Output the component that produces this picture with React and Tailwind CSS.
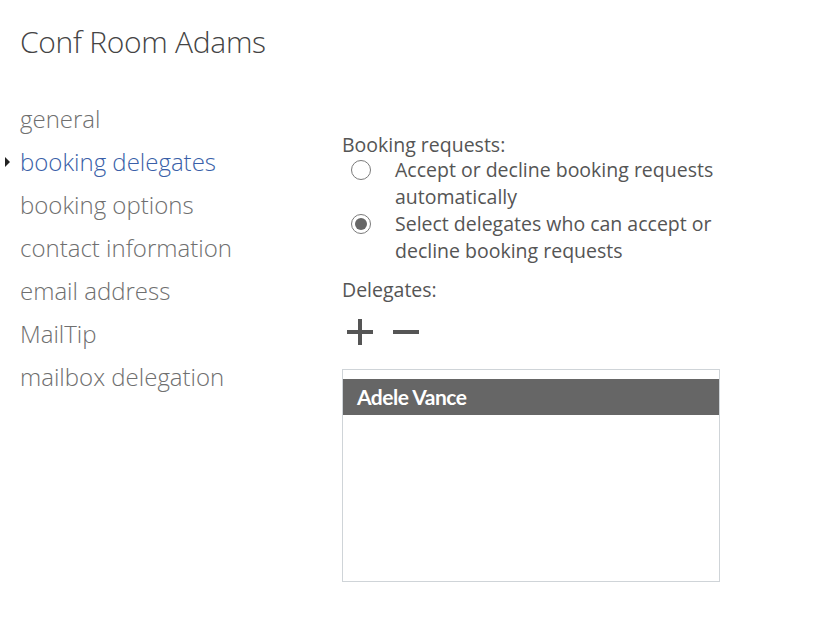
export default function App() {
  const items = [
    "general",
    "booking delegates",
    "booking options",
    "contact information",
    "email address",
    "MailTip",
    "mailbox delegation",
  ];
  const active = "booking delegates";

  return (
    <div className="w-[840px] h-[636px] bg-white font-['Open_Sans',sans-serif] text-[#444] relative">
      <h1 className="pl-5 pt-[22px] text-[30px] leading-[40px] font-light text-[#444] tracking-[-0.3px]">
        Conf Room Adams
      </h1>

      <div className="flex mt-[35px]">
        {/* left nav */}
        <ul className="w-[342px] shrink-0">
          {items.map((item) => (
            <li key={item} className="relative h-[43px] leading-[43px] pl-5">
              {item === active && (
                <span className="absolute left-[5px] top-[17px] w-0 h-0 border-y-[5px] border-y-transparent border-l-[5px] border-l-[#222]" />
              )}
              <span
                className={
                  "text-[24px] font-light " +
                  (item === active ? "text-[#3a5fa8]" : "text-[#6f6f6f]")
                }
              >
                {item}
              </span>
            </li>
          ))}
        </ul>

        {/* right content */}
        <div className="w-[378px] pt-[35px] text-[19.5px] text-[#555]">
          <div className="leading-[26px]">Booking requests:</div>

          <div className="mt-[-2px] flex flex-col">
            <label className="flex items-start">
              <span className="pl-[9px] pt-[4px] shrink-0">
                <span className="block w-[20px] h-[20px] rounded-full border border-[#7a7a7a] bg-white" />
              </span>
              <span className="ml-[24px] leading-[27px]">
                Accept or decline booking requests automatically
              </span>
            </label>
            <label className="flex items-start">
              <span className="pl-[9px] pt-[4px] shrink-0">
                <span className="w-[20px] h-[20px] rounded-full border border-[#7a7a7a] bg-white flex items-center justify-center">
                  <span className="w-[12px] h-[12px] rounded-full bg-[#666]" />
                </span>
              </span>
              <span className="ml-[24px] leading-[27px]">
                Select delegates who can accept or decline booking requests
              </span>
            </label>
          </div>

          <div className="mt-[13px] leading-[26px]">Delegates:</div>

          <div className="flex items-center gap-[20px] mt-[16px] pl-[5px] h-[26px]">
            <svg width="26" height="26" viewBox="0 0 26 26">
              <rect x="11" y="0" width="4" height="26" fill="#555" />
              <rect x="0" y="11" width="26" height="4" fill="#555" />
            </svg>
            <svg width="26" height="26" viewBox="0 0 26 26">
              <rect x="0" y="11" width="26" height="4" fill="#555" />
            </svg>
          </div>

          <div className="mt-[24px] w-[378px] h-[213px] border border-[#cfd4d8] pt-[9px]">
            <div className="h-[36px] bg-[#666] pl-[14px] flex items-center text-white font-['Lato',sans-serif] font-bold text-[21px] tracking-[-0.5px]">
              Adele Vance
            </div>
          </div>
        </div>
      </div>
    </div>
  );
}
